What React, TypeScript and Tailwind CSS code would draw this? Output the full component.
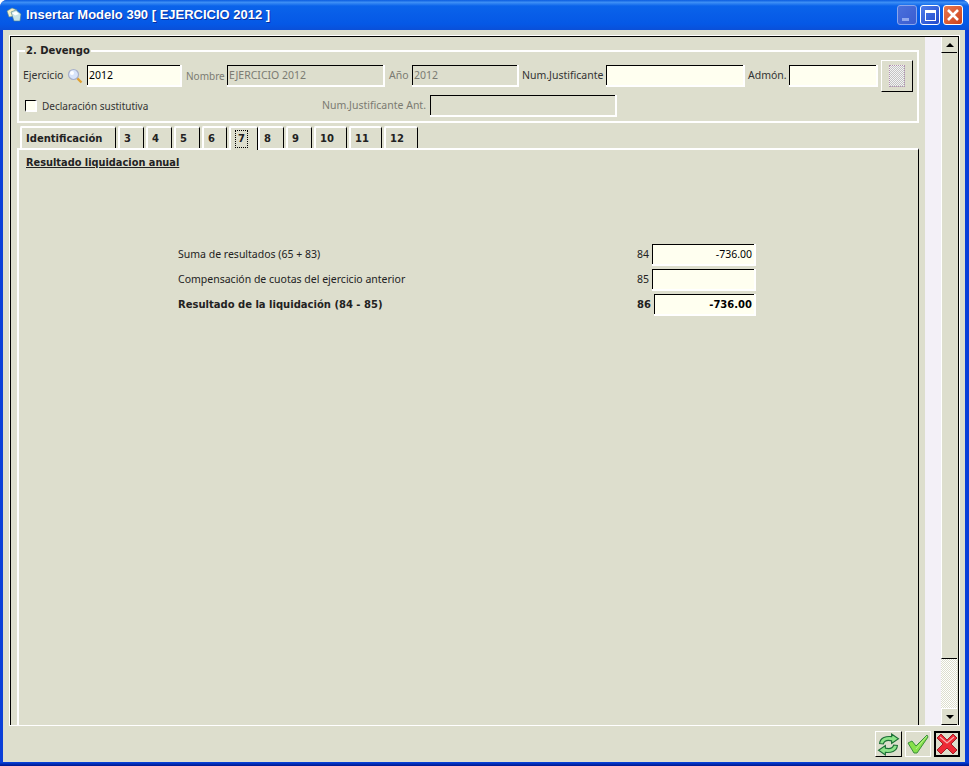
import React from 'react'

const bold = "font-bold font-['DejaVu_Sans',sans-serif]"

function Field({ w, off, strong, right, value }: { w: string; off?: boolean; strong?: boolean; right?: boolean; value?: string }) {
    return (
        <div className={`${w} h-[22px] shrink-0 border-2 border-white border-t-0 border-l-0`}>
            <div className={`h-full border-t border-l border-black px-[1px] leading-[19px] whitespace-nowrap ${off ? 'bg-[#dddecd] text-[#7b7b72]' : 'bg-[#fffff0] text-black'} ${strong ? bold + ' text-[10px]' : 'text-[10.5px]'} ${right ? 'text-right pr-[2px]' : ''}`}>
                {value}
            </div>
        </div>
    )
}

function Tab({ label, w, active }: { label: string; w: string; active?: boolean }) {
    return (
        <div className={`${w} shrink-0 rounded-tl-[2px] rounded-tr-[3px] border-t-2 border-l-2 border-white border-r border-r-black flex items-center pl-[4px] text-[10px] text-[#222] bg-[#dddecd] ${bold} ${active ? 'h-[24px] -mb-[2px] relative z-10' : 'h-[22px] mr-[2px]'}`}>
            {active ? <span className="border border-dotted border-black leading-[16px] px-[2px]">{label}</span> : label}
        </div>
    )
}

function ResultRow({ label, num, value, strong, w }: { label: string; num: string; value?: string; strong?: boolean; w: string }) {
    return (
        <div className={`flex items-center h-[20px] mb-[5px] text-[#222] ${strong ? bold + ' text-[10px]' : 'text-[10.5px]'}`}>
            <div className="w-[430px]">{label}</div>
            <div className="flex-1 text-right pr-[3px]">{num}</div>
            <Field w={w} value={value} strong={strong} right />
        </div>
    )
}

export default function App() {
    const tabs = [
        { l: '3', w: 'w-[26px]' },
        { l: '4', w: 'w-[26px]' },
        { l: '5', w: 'w-[26px]' },
        { l: '6', w: 'w-[25px]' },
    ]
    const tabs2 = [
        { l: '8', w: 'w-[26px]' },
        { l: '9', w: 'w-[26px]' },
        { l: '10', w: 'w-[33px]' },
        { l: '11', w: 'w-[33px]' },
        { l: '12', w: 'w-[34px]' },
    ]
    return (
        <div className="font-['Noto_Sans',sans-serif] w-[969px] h-[766px] flex flex-col rounded-t-[7px] overflow-hidden bg-[#0a3fd8] text-black">
            {/* title bar */}
            <div className="h-[30px] shrink-0 flex items-center pl-[6px] pr-[6px] bg-[linear-gradient(#0a5ce0,#3d8ff5_8%,#0a63ea_20%,#0558e6_80%,#0a4fd8)]">
                <svg width="16" height="16" viewBox="0 0 16 16">
                    <path d="M1 4 L6 1 L11 3 L9 9 L3 10 Z" fill="#f4f0c8" stroke="#5f8a8a" strokeWidth="0.6" />
                    <path d="M5 5 L10 3 L15 7 L14 14 L8 14 Z" fill="#c8e4e8" stroke="#4f7f8a" strokeWidth="0.6" />
                    <path d="M6 6 L10 4.5 L13 7 L9 8.5 Z" fill="#ffffff" />
                </svg>
                <div className="ml-[4px] text-white font-bold font-['Liberation_Sans',sans-serif] text-[13px] whitespace-nowrap flex-1 [text-shadow:1px_1px_0_#0a2f9c]">Insertar Modelo 390 [ EJERCICIO 2012 ]</div>
                <div className="flex gap-[3px]">
                    <div className="w-[20px] h-[20px] rounded-[3px] border border-[#8ba6ec] bg-gradient-to-br from-[#4a70dc] to-[#3a5cd0] flex items-end pl-[4px] pb-[3px]">
                        <div className="w-[7px] h-[3px] bg-[#8fa8ee]" />
                    </div>
                    <div className="w-[20px] h-[20px] rounded-[3px] border border-white bg-gradient-to-br from-[#4f7cea] to-[#2248cc] flex items-center justify-center">
                        <div className="w-[11px] h-[11px] border border-white border-t-[3px]" />
                    </div>
                    <div className="w-[20px] h-[20px] rounded-[3px] border border-white bg-gradient-to-br from-[#e8794f] to-[#cc3f18] flex items-center justify-center">
                        <svg width="14" height="14" viewBox="0 0 14 14">
                            <path d="M2 2 L12 12 M12 2 L2 12" stroke="#fff" strokeWidth="2.6" />
                        </svg>
                    </div>
                </div>
            </div>

            {/* window body */}
            <div className="flex-1 ml-[3px] mr-[4px] bg-[#dddecd] flex flex-col">
                <div className="ml-[6px] mt-[5px] w-[951px] h-[691px] shrink-0 border border-white">
                    <div className="h-full border-t border-l border-r border-black flex overflow-hidden">
                        <div className="w-[914px] shrink-0 pl-[6px] pr-[6px]">
                            <fieldset className="border-2 border-white h-[79px] mt-[7px] pl-[6px] w-[902px]">
                                <legend className={`px-[1px] text-[10px] leading-[13px] text-[#222] ${bold}`}>2. Devengo</legend>
                                <div className="flex items-start -ml-[2px] mt-[3px] text-[10.5px] text-[#333]">
                                    <div className="flex items-center h-[32px]">
                                        <div className="flex items-center w-[64px]">
                                            <span className="w-[44px]">Ejercicio</span>
                                            <svg width="16" height="16" viewBox="0 0 16 16" className="shrink-0">
                                                <line x1="9.5" y1="9.5" x2="14.5" y2="14.5" stroke="#e0a030" strokeWidth="2.4" />
                                                <circle cx="6.5" cy="6.5" r="5" fill="#d8e4fa" stroke="#a8b0c8" strokeWidth="1.2" />
                                                <circle cx="5" cy="5" r="2" fill="#fff" />
                                            </svg>
                                        </div>
                                        <Field w="w-[95px]" value="2012" />
                                        <span className="w-[45px] pl-[4px] text-[#7b7b72] text-[10px]">Nombre</span>
                                        <Field w="w-[158px]" off value="EJERCICIO 2012" />
                                        <span className="w-[27px] pl-[4px] text-[#7b7b72]">Año</span>
                                        <Field w="w-[107px]" off value="2012" />
                                        <span className="w-[87px] pl-[3px]">Num.Justificante</span>
                                        <Field w="w-[139px]" />
                                        <span className="w-[44px] pl-[3px]">Admón.</span>
                                        <Field w="w-[89px]" />
                                    </div>
                                    <div className="ml-[3px] w-[32px] h-[32px] shrink-0 border-t border-l border-white border-r border-b border-r-black border-b-black flex items-center justify-center">
                                        <div className="w-[16px] h-[22px] border border-dotted border-[#b090b0] bg-[repeating-conic-gradient(#c4c4c4_0_25%,#f4f4f4_0_50%)] bg-[length:2px_2px]" />
                                    </div>
                                </div>
                                <div className="flex items-center h-[22px] mt-[3px] -ml-[2px] text-[10.5px] text-[#333]">
                                    <div className="ml-[2px] w-[12px] h-[12px] shrink-0 border-t border-l border-black border-b-2 border-r-2 border-b-white border-r-white bg-[#fffff0]" />
                                    <span className="ml-[5px] w-[280px] text-[10px]">Declaración sustitutiva</span>
                                    <span className="w-[108px] text-[#7b7b72] whitespace-nowrap">Num.Justificante Ant.</span>
                                    <Field w="w-[187px]" off />
                                </div>
                            </fieldset>

                            {/* tabs */}
                            <div className="flex items-end h-[27px] pl-[3px] -mt-[2px]">
                                <Tab label="Identificación" w="w-[96px] mr-[2px]" />
                                {tabs.map((t) => <Tab key={t.l} label={t.l} w={t.w} />)}
                                <Tab label="7" w="w-[29px]" active />
                                {tabs2.map((t) => <Tab key={t.l} label={t.l} w={t.w} />)}
                            </div>

                            <div className="w-[902px] h-[600px] border-t-2 border-l-2 border-white border-r border-r-black">
                                <div className={`pl-[7px] pt-[6px] underline text-[9.8px] text-[#222] ${bold}`}>Resultado liquidacion anual</div>
                                <div className="ml-[159px] mr-[162px] mt-[74px]">
                                    <ResultRow label="Suma de resultados (65 + 83)" num="84" value="-736.00" w="w-[104px]" />
                                    <ResultRow label="Compensación de cuotas del ejercicio anterior" num="85" w="w-[104px]" />
                                    <ResultRow label="Resultado de la liquidación (84 - 85)" num="86" value="-736.00" strong w="w-[102px]" />
                                </div>
                            </div>
                        </div>

                        <div className="w-[16px] shrink-0 bg-[#f3f0f7]" />

                        {/* scrollbar */}
                        <div className="w-[16px] shrink-0 flex flex-col">
                            <div className="h-[16px] shrink-0 border-b border-b-black border-l border-l-white flex items-center justify-center">
                                <div className="w-0 h-0 border-x-[4px] border-x-transparent border-b-[4px] border-b-black" />
                            </div>
                            <div className="h-[606px] shrink-0 border-l border-l-white border-b border-b-black" />
                            <div className="flex-1 bg-[repeating-conic-gradient(#ffffff_0_25%,#dddecd_0_50%)] bg-[length:2px_2px]" />
                            <div className="h-[17px] shrink-0 border-l border-t border-white border-b border-b-black flex items-center justify-center">
                                <div className="w-0 h-0 border-x-[4px] border-x-transparent border-t-[4px] border-t-black" />
                            </div>
                        </div>
                    </div>
                </div>

                {/* bottom buttons */}
                <div className="flex justify-end gap-[3px] pr-[5px] pt-[5px]">
                    <div className="w-[27px] h-[26px] border-t border-l border-white border-r border-b border-r-black border-b-black flex items-center justify-center">
                        <svg width="23" height="23" viewBox="0 0 22 22" fill="none">
                            <path d="M2.5 10 C3 4 9 3 14 3.5 L14 1 L20.5 5.5 L14 10 L14 7.5 C10 6.5 7 7.5 6 10.5 Z" fill="#8fe48a" stroke="#1c6e36" strokeWidth="1.1" />
                            <path d="M19.5 12 C19 18 13 19 8 18.5 L8 21 L1.5 16.5 L8 12 L8 14.5 C12 15.5 15 14.5 16 11.5 Z" fill="#8fe48a" stroke="#1c6e36" strokeWidth="1.1" />
                        </svg>
                    </div>
                    <div className="w-[26px] h-[26px] border border-white flex items-center justify-center">
                        <svg width="22" height="20" viewBox="0 0 22 20">
                            <path d="M1 9 L5 7 L9 12 L20 1 L21 3 L10 19 L7 19 Z" fill="#86e04a" stroke="#3a8f3a" strokeWidth="1" />
                            <path d="M9 15 L20 2" stroke="#c4f4a0" strokeWidth="0.8" />
                        </svg>
                    </div>
                    <div className="w-[26px] h-[26px] border-2 border-black flex items-center justify-center">
                        <svg width="22" height="22" viewBox="0 0 22 22">
                            <path d="M1 5 L5 1 L11 7 L17 1 L21 5 L15 11 L21 17 L17 21 L11 15 L5 21 L1 17 L7 11 Z" fill="#ee2a36" stroke="#a02028" strokeWidth="1" />
                            <path d="M4 4 L11 10 L18 4" fill="none" stroke="#f8b0b0" strokeWidth="1.2" />
                        </svg>
                    </div>
                </div>
            </div>
            <div className="h-[4px] shrink-0 bg-gradient-to-b from-[#0a45e0] to-[#00148c]" />
        </div>
    )
}
